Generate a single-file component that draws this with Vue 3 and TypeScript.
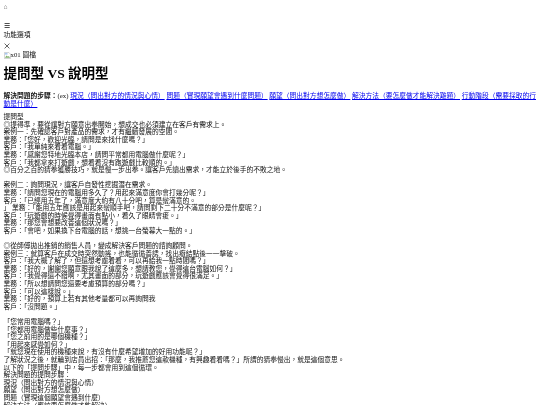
<script setup lang="ts">
const links: string[] = [
  '現況（問出對方的情況與心情）',
  '問題（實現願望會遇到什麼問題）',
  '願望（問出對方想怎麼做）',
  '解決方法（要怎麼做才能解決難題）',
  '行動階段（需要採取的行動是什麼）',
]
const lines: string[] = [
  '提問型',
  '◎提得準，要從讓對方願意出拳開始，想成交也必須建立在客戶有需求上。',
  '案例一：先確認客戶對產品的需求，才有繼續發展的空間。',
  '業務：「您好，歡迎光臨，請問是來找什麼嗎？」',
  '客戶：「我單純來看看電腦。」',
  '業務：「感謝您特地光臨本店，請問平常都用電腦做什麼呢？」',
  '客戶：「我都拿來打遊戲，想看看沒有跑遊戲比較順的。」',
  '◎百分之百的猜拳獲勝技巧，就是慢一步出拳。讓客戶先讀出需求，才能立於後手的不敗之地。',
  '',
  '案例二：詢問現況，讓客戶自發性挖掘潛在需求。',
  '業務：「請問您現在的電腦用多久了？用起來滿意度你會打幾分呢？」',
  '客戶：「已經用五年了，滿意度大約有八十分吧，算是蠻滿意的。',
  '」 業務：「能用五年應該是用起來蠻順手吧，請問剩下二十分不滿意的部分是什麼呢？」',
  '客戶：「玩遊戲的時候覺得畫面有點小，看久了眼睛會痠。」',
  '業務：「那您會想要改善這個狀況嗎？」',
  '客戶：「會吧，如果換下台電腦的話，想挑一台螢幕大一點的。」',
  '',
  '◎從師傅拋出推銷的銷售人員，變成解決客戶問題的諮詢顧問。',
  '案例三：就算客戶在成交時突然動搖，也能循循善誘，找出癥結點後一一擊破。',
  '客戶：「我大概了解了，但還想考慮看看，可以再給我一點時間嗎？」',
  '業務：「好的，謝謝您願意跟我說了這麼多，想請教您，覺得這台電腦如何？」',
  '客戶：「我覺得還不錯啊，尤其畫面的部分，玩遊戲應該會覺得很滿足。」',
  '業務：「所以想請問您還要考慮預算的部分嗎？」',
  '客戶：「可以這樣說。」',
  '業務：「好的，預算上若有其他考量都可以再詢問我',
  '客戶：「沒問題。」',
  '',
  '「您常用電腦嗎？」',
  '「您都用電腦做些什麼事？」',
  '「您之前用的是哪個機種？」',
  '「用起來感覺如何？」',
  '「就您現在使用的機種來說，有沒有什麼希望增加的好用功能呢？」',
  '了解狀況之後，就輪到店員出招：「那麼，我推薦您這款機種，有興趣看看嗎？」所謂的猜拳慢出，就是這個意思。',
  '以下的「提問步驟」中，每一步都會用到這個循環。',
  '解決問題的提問步驟：',
  '現況（問出對方的情況與心情）',
  '願望（問出對方想怎麼做）',
  '問題（實現這個願望會遇到什麼）',
  '解決方法（應該要怎麼做才能解決）',
]
</script>

<template>
  <div class="page">
    <div class="home">⌂</div>
    <div class="burger">☰</div>
    <div class="row">功能選項</div>
    <div class="close">
      <svg viewBox="0 0 6 6" width="6" height="6">
        <path d="M.6.6l4.8 4.8M5.4.6L.6 5.4" fill="none" stroke="#222" stroke-width=".7" />
      </svg>
    </div>
    <div class="row pic">
      <svg class="broken" viewBox="0 0 16 16" width="7" height="7">
        <path d="M1 1h10l4 4v10H1z" fill="#fff" stroke="#9a9a9a" />
        <path d="M2 13l4-5 3 3 2-2 3 4z" fill="#7fb069" />
        <rect x="2" y="2" width="6" height="4" fill="#a9c8f0" />
      </svg>
      <span>x01 圖檔</span>
    </div>
    <h1 class="title">提問型 VS 說明型</h1>
    <p class="steps">
      <strong>解決問題的步驟：</strong>(ex)
      <template v-for="l in links" :key="l"><a href="#" class="link">{{ l }}</a>{{ ' ' }}</template>
    </p>
    <div class="body">
      <div v-for="(l, i) in lines" :key="i" class="line">{{ l }}</div>
    </div>
  </div>
</template>

<style scoped>
.page {
  height: 405px;
  overflow: hidden;
  padding: 3px 3.6px 0;
  box-sizing: border-box;
  font-family: "Liberation Serif", "Noto Sans CJK TC", serif;
  font-size: 6.75px;
  line-height: 8px;
  color: #111;
  filter: blur(0.25px);
}
.home {
  height: 9px;
  margin-bottom: 10px;
  color: #666;
}
.burger {
  height: 9px;
}
.row {
  height: 10px;
}
.close {
  height: 9px;
  display: flex;
  align-items: center;
}
.pic {
  display: flex;
  align-items: center;
}
.broken {
  flex: none;
}
.title {
  font-size: 13.5px;
  line-height: 17px;
  font-weight: bold;
  margin: 5px 0 10px;
  color: #000;
}
.steps {
  margin: 0 0 5px;
}
.link {
  color: #0000ee;
  text-decoration: underline;
}
.line {
  min-height: 7.6px;
  line-height: 7.6px;
  white-space: nowrap;
}
</style>
